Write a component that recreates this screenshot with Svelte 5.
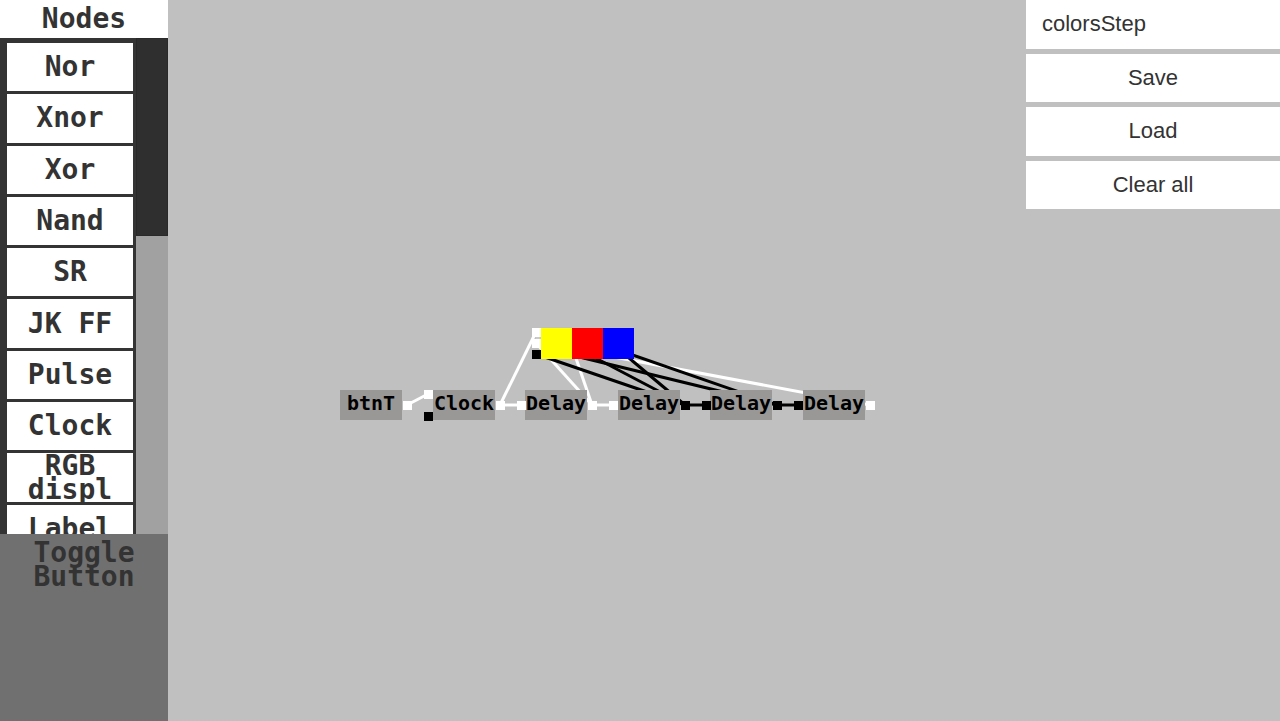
<script>
  const palette = ['Nor', 'Xnor', 'Xor', 'Nand', 'SR', 'JK FF', 'Pulse', 'Clock', 'RGB displ', 'Label'];

  let fileName = $state('colorsStep');

  const ON = '#ffffff';
  const OFF = '#000000';

  const nodes = [
    { x: 340, label: 'btnT' },
    { x: 433, label: 'Clock' },
    { x: 525, label: 'Delay' },
    { x: 618, label: 'Delay' },
    { x: 710, label: 'Delay' },
    { x: 803, label: 'Delay' }
  ];

  const displays = [
    { x: 541, color: '#ffff00' },
    { x: 572, color: '#ff0000' },
    { x: 603, color: '#0000ff' }
  ];

  // Centre points of the sockets
  const ports = [
    [407, 405, ON],
    [428, 394, ON],
    [428, 416, OFF],
    [500, 405, ON],
    [521, 405, ON],
    [592, 405, ON],
    [613, 405, ON],
    [685, 405, OFF],
    [706, 405, OFF],
    [777, 405, OFF],
    [798, 405, OFF],
    [870, 405, ON],
    [536, 332, ON],
    [536, 343, ON],
    [536, 354, OFF]
  ];

  const wires = [
    [870, 405, 598, 354, ON],
    [407, 405, 428, 394, ON],
    [500, 405, 521, 405, ON],
    [592, 405, 613, 405, ON],
    [685, 405, 706, 405, OFF],
    [777, 405, 798, 405, OFF],
    [500, 405, 536, 332, ON],
    [592, 405, 536, 343, ON],
    [592, 405, 567, 332, ON],
    [685, 405, 536, 354, OFF],
    [685, 405, 567, 343, OFF],
    [685, 405, 598, 332, OFF],
    [777, 405, 567, 354, OFF],
    [777, 405, 598, 343, OFF]
  ];
</script>

<div class="app">
  <aside class="sidebar">
    <h1>Nodes</h1>
    <div class="browser">
      <div class="viewport">
        <div class="list">
          {#each palette as name}
            <button class="item">{name}</button>
          {/each}
        </div>
      </div>
      <div class="track"><div class="thumb"></div></div>
    </div>
    <div class="tray">
      <button class="toggle">Toggle Button</button>
    </div>
  </aside>

  <main class="canvas">
    <svg viewBox="168 0 1112 721" role="img" aria-label="Circuit">
      {#each wires as [x1, y1, x2, y2, color]}
        <line {x1} {y1} {x2} {y2} stroke={color} stroke-width="3" />
      {/each}
      {#each nodes as node}
        <rect x={node.x} y="390" width="62" height="30" fill="#999897" />
      {/each}
      {#each ports as [x, y, color]}
        <rect x={x - 4} y={y - 4} width="9" height="9" fill={color} />
      {/each}
      <line x1="536" y1="338" x2="541" y2="338" stroke="#d5d5d5" />
      {#each displays as d}
        <rect x={d.x} y="328" width="31" height="31" fill={d.color} />
      {/each}
      {#each nodes as node}
        <text x={node.x + 31} y="410">{node.label}</text>
      {/each}
    </svg>

    <form class="files" onsubmit={(e) => e.preventDefault()}>
      <input type="text" aria-label="File name" bind:value={fileName} />
      <button type="button">Save</button>
      <button type="button">Load</button>
      <button type="button">Clear all</button>
    </form>
  </main>
</div>

<style>
  :global(body) {
    margin: 0;
  }

  .app {
    display: grid;
    grid-template-columns: 168px 1fr;
    height: 100vh;
    overflow: hidden;
    background: #c0c0c0;
    color: #333;
  }

  button,
  input {
    margin: 0;
    border: 0;
    border-radius: 0;
    color: inherit;
    background: #fff;
  }

  .sidebar {
    display: flex;
    flex-direction: column;
    min-height: 0;
    background: #707070;
  }

  h1,
  .item,
  .toggle {
    font: bold 28px/24px 'DejaVu Sans Mono', monospace;
    text-align: center;
  }

  h1 {
    margin: 0;
    padding: 7px 0;
    background: #fff;
  }

  .browser {
    display: flex;
    flex: 1;
    min-height: 0;
    background: #343434;
  }

  .viewport {
    flex: 1;
    overflow: hidden;
    padding: 5px 3px 0 7px;
  }

  .list {
    display: grid;
    grid-auto-rows: 1fr;
    gap: 3px;
    height: 510px;
  }

  .item {
    padding: 0;
    min-height: 0;
    overflow: hidden;
  }

  .track {
    width: 32px;
    background: #a1a1a1;
  }

  .thumb {
    box-sizing: border-box;
    height: 40%;
    border: 1px solid #292929;
    background: #2f2f2f;
  }

  .tray {
    height: 26%;
  }

  .toggle {
    width: 100%;
    padding: 7px 16px;
    background: transparent;
  }

  .canvas {
    position: relative;
    min-width: 0;
    min-height: 0;
  }

  svg {
    display: block;
    width: 100%;
    height: 100%;
  }

  text {
    font: bold 20px 'DejaVu Sans Mono', monospace;
    text-anchor: middle;
    fill: #000;
  }

  .files {
    position: absolute;
    top: 0;
    right: 0;
    display: grid;
    grid-auto-rows: 1fr;
    gap: 5px;
    width: 254px;
    height: 209px;
  }

  .files input,
  .files button {
    box-sizing: border-box;
    width: 100%;
    padding: 0 16px;
    font: 22px 'Liberation Sans', Arial, sans-serif;
  }
</style>
